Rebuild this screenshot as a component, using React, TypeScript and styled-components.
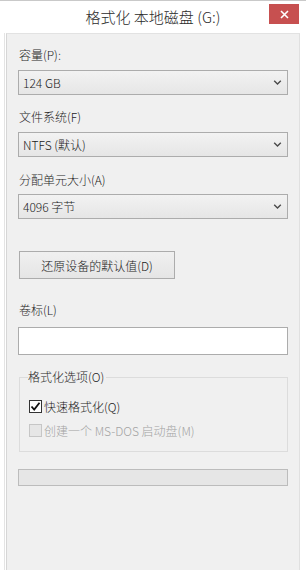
import React from "react";
import styled, { createGlobalStyle } from "styled-components";

const Global = createGlobalStyle`
  html, body { margin: 0; padding: 0; background: #ffffff; }
  body { font-family: "Noto Sans CJK SC", "Noto Sans", sans-serif; }
  * { box-sizing: border-box; }
`;

const Window = styled.div`
  width: 306px;
  height: 570px;
  background: #ffffff;
  border-top: 1px solid #c9c9c9;
  display: flex;
  flex-direction: column;
  overflow: hidden;
`;

const TitleBar = styled.div`
  position: relative;
  height: 32px;
  display: flex;
  align-items: center;
  justify-content: center;
  flex-shrink: 0;
`;

const Title = styled.div`
  font-size: 15px;
  font-weight: 300;
  color: #2b2b2b;
  margin-top: -1px;
`;

const CloseButton = styled.div`
  position: absolute;
  top: 3px;
  right: 7px;
  width: 30px;
  height: 20px;
  background: #c75050;
  display: flex;
  align-items: center;
  justify-content: center;
`;

const Body = styled.div`
  flex: 1;
  display: flex;
  padding-left: 4px;
  padding-right: 6px;
`;

const Frame = styled.div`
  flex: 1;
  border-left: 1px solid #e4e4e4;
  padding-left: 1px;
  display: flex;
`;

const Panel = styled.div`
  flex: 1;
  background: #f0f0f0;
  border-left: 1px solid #d6d6d6;
  border-top: 1px solid #e2e2e2;
  border-right: 1px solid #e0e0e0;
  padding: 13px 11px 0 11px;
  display: flex;
  flex-direction: column;
  font-weight: 300;
`;

const Label = styled.div<{ $mt?: number }>`
  font-size: 12px;
  line-height: 16px;
  height: 16px;
  color: #1e1e1e;
  margin-top: ${(p) => p.$mt ?? 0}px;
  margin-left: 1px;
`;

const Select = styled.div<{ $mt?: number }>`
  margin-top: ${(p) => p.$mt ?? 0}px;
  height: 25px;
  border: 1px solid #acacac;
  background: linear-gradient(#f2f2f2, #e6e6e6);
  display: flex;
  align-items: center;
  justify-content: space-between;
  padding: 0 5px 0 4px;
  font-size: 12px;
  color: #1a1a1a;
`;

const Chevron = () => (
  <svg width="9" height="7" viewBox="0 0 9 7">
    <path d="M1.2 1.8 L4.5 5 L7.8 1.8" fill="none" stroke="#4a4a4a" strokeWidth="1.4" />
  </svg>
);

const Button = styled.div`
  margin-top: 32px;
  margin-left: 1px;
  width: 156px;
  height: 28px;
  border: 1px solid #acacac;
  background: linear-gradient(#f0f0f0, #e5e5e5);
  display: flex;
  align-items: center;
  justify-content: center;
  font-size: 12px;
  color: #1a1a1a;
`;

const TextInput = styled.div`
  margin-top: 9px;
  height: 28px;
  border: 1px solid #acacac;
  background: #ffffff;
`;

const Group = styled.fieldset`
  margin: 14px 0 0 1px;
  padding: 12px 0 0 9px;
  border: 1px solid #dcdcdc;
  height: 83px;
  display: flex;
  flex-direction: column;
  gap: 6px;
`;

const Legend = styled.legend`
  font-size: 12px;
  line-height: 16px;
  color: #1e1e1e;
  padding: 0 2px 0 0;
  margin-left: -1px;
`;

const CheckRow = styled.div<{ $disabled?: boolean }>`
  display: flex;
  align-items: center;
  gap: 2px;
  height: 18px;
  font-size: 12px;
  color: ${(p) => (p.$disabled ? "#a3a3a3" : "#1a1a1a")};
`;

const Box = styled.div<{ $disabled?: boolean }>`
  width: 13px;
  height: 13px;
  border: 1px solid ${(p) => (p.$disabled ? "#c6c6c6" : "#333333")};
  background: ${(p) => (p.$disabled ? "#e6e6e6" : "#ffffff")};
  display: flex;
  align-items: center;
  justify-content: center;
`;

const Progress = styled.div`
  margin-top: 17px;
  height: 17px;
  border: 1px solid #bcbcbc;
  background: #e6e6e6;
`;

export default function App() {
  return (
    <>
      <Global />
      <Window>
        <TitleBar>
          <Title>格式化 本地磁盘 (G:)</Title>
          <CloseButton>
            <svg width="9" height="9" viewBox="0 0 9 9">
              <path d="M1 1 L8 8 M8 1 L1 8" stroke="#ffffff" strokeWidth="1.6" />
            </svg>
          </CloseButton>
        </TitleBar>
        <Body>
          <Frame>
            <Panel>
              <Label>容量(P):</Label>
              <Select $mt={7}>
                <span>124 GB</span>
                <Chevron />
              </Select>
              <Label $mt={14}>文件系统(F)</Label>
              <Select $mt={7}>
                <span>NTFS (默认)</span>
                <Chevron />
              </Select>
              <Label $mt={15}>分配单元大小(A)</Label>
              <Select $mt={6}>
                <span>4096 字节</span>
                <Chevron />
              </Select>
              <Button>还原设备的默认值(D)</Button>
              <Label $mt={23}>卷标(L)</Label>
              <TextInput />
              <Group>
                <Legend>格式化选项(O)</Legend>
                <CheckRow>
                  <Box>
                    <svg width="11" height="11" viewBox="0 0 11 11">
                      <path d="M1.5 5.5 L4.2 8.5 L9.5 1.8" fill="none" stroke="#111" strokeWidth="1.8" />
                    </svg>
                  </Box>
                  <span>快速格式化(Q)</span>
                </CheckRow>
                <CheckRow $disabled>
                  <Box $disabled />
                  <span>创建一个 MS-DOS 启动盘(M)</span>
                </CheckRow>
              </Group>
              <Progress />
            </Panel>
          </Frame>
        </Body>
      </Window>
    </>
  );
}
